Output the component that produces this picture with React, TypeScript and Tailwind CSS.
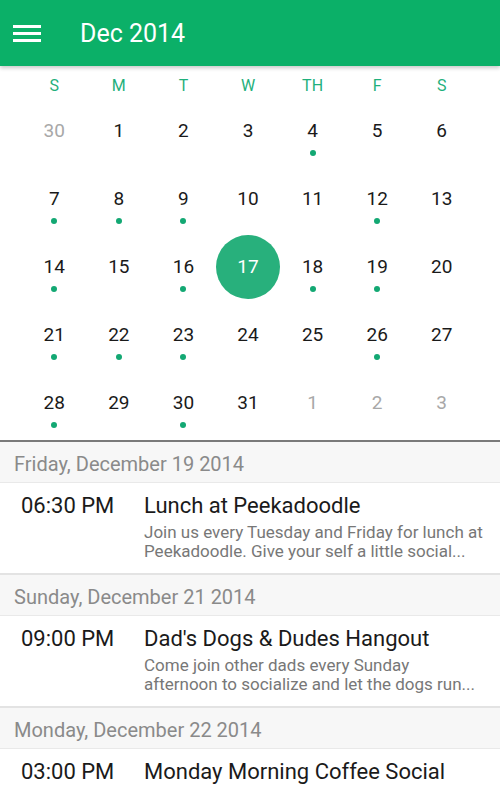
import React from "react";

const weekdays = ["S", "M", "T", "W", "TH", "F", "S"];

type Cell = { n: number; muted?: boolean; dot?: boolean; selected?: boolean };

const weeks: Cell[][] = [
  [{ n: 30, muted: true }, { n: 1 }, { n: 2 }, { n: 3 }, { n: 4, dot: true }, { n: 5 }, { n: 6 }],
  [{ n: 7, dot: true }, { n: 8, dot: true }, { n: 9, dot: true }, { n: 10 }, { n: 11 }, { n: 12, dot: true }, { n: 13 }],
  [{ n: 14, dot: true }, { n: 15 }, { n: 16, dot: true }, { n: 17, selected: true }, { n: 18, dot: true }, { n: 19, dot: true }, { n: 20 }],
  [{ n: 21, dot: true }, { n: 22, dot: true }, { n: 23, dot: true }, { n: 24 }, { n: 25 }, { n: 26, dot: true }, { n: 27 }],
  [{ n: 28, dot: true }, { n: 29 }, { n: 30, dot: true }, { n: 31 }, { n: 1, muted: true }, { n: 2, muted: true }, { n: 3, muted: true }],
];

const events = [
  {
    date: "Friday, December 19 2014",
    time: "06:30 PM",
    title: "Lunch at Peekadoodle",
    desc: ["Join us every Tuesday and Friday for lunch at", "Peekadoodle. Give your self a little social..."],
  },
  {
    date: "Sunday, December 21 2014",
    time: "09:00 PM",
    title: "Dad's Dogs & Dudes Hangout",
    desc: ["Come join other dads every Sunday", "afternoon to socialize and let the dogs run..."],
  },
  {
    date: "Monday, December 22 2014",
    time: "03:00 PM",
    title: "Monday Morning Coffee Social",
    desc: ["", ""],
  },
];

export default function App() {
  return (
    <div
      className="w-[500px] h-[788px] overflow-hidden bg-white relative"
      style={{ fontFamily: "Roboto, 'Liberation Sans', sans-serif" }}
    >
      {/* App bar */}
      <div className="relative z-10 h-[66px] bg-[#0bb068] flex items-center shadow-[0_2px_4px_rgba(0,0,0,0.22)]">
        <div className="ml-[13px] w-[28px] flex flex-col gap-[4px]">
          <div className="h-[3px] bg-white" />
          <div className="h-[3px] bg-white" />
          <div className="h-[3px] bg-white" />
        </div>
        <div className="ml-[39px] text-white text-[25px] leading-none">Dec 2014</div>
      </div>

      {/* Calendar */}
      <div className="pl-[22px] pr-[26px]">
        <div className="grid grid-cols-7 h-[34px] pt-[10px]">
          {weekdays.map((d, i) => (
            <div key={i} className="text-center text-[16px] leading-[19px] text-[#1fb07c]">
              {d}
            </div>
          ))}
        </div>
        {weeks.map((w, wi) => (
          <div key={wi} className="grid grid-cols-7 h-[68px]">
            {w.map((c, ci) => (
              <div key={ci} className="relative flex flex-col items-center">
                {c.selected && (
                  <div className="absolute left-1/2 top-[-1px] -translate-x-1/2 w-[64px] h-[64px] rounded-full bg-[#28b07c]" />
                )}
                <div
                  className={
                    "relative mt-[19px] text-[19px] leading-[24px] " +
                    (c.selected ? "text-white" : c.muted ? "text-[#a8a8a8]" : "text-[#1a1a1a]")
                  }
                >
                  {c.n}
                </div>
                {c.dot && <div className="mt-[7px] w-[6px] h-[6px] rounded-full bg-[#13a873]" />}
              </div>
            ))}
          </div>
        ))}
      </div>

      <div className="h-[2px] bg-[#7a7a7a]" />

      {/* Agenda */}
      {events.map((e, i) => (
        <div key={i}>
          {i > 0 && <div className="h-[2px] bg-[#e3e3e3]" />}
          <div className="h-[41px] bg-[#f7f7f7] border-b border-[#e9e9e9] flex items-center pt-[3px] pl-[14px] text-[20px] text-[#8a8a8a]">
            {e.date}
          </div>
          <div className="h-[90px] flex">
            <div className="w-[144px] pl-[21px] pt-[10px] text-[22px] leading-[26px] text-[#1a1a1a]">{e.time}</div>
            <div className="flex-1 pt-[10px]">
              <div className="text-[22px] leading-[26px] text-[#1a1a1a] whitespace-nowrap">{e.title}</div>
              <div className="mt-[4px] text-[17px] leading-[19px] text-[#777] whitespace-nowrap">
                <div className="h-[19px]">{e.desc[0]}</div>
                <div className="h-[19px]">{e.desc[1]}</div>
              </div>
            </div>
          </div>
        </div>
      ))}
    </div>
  );
}
